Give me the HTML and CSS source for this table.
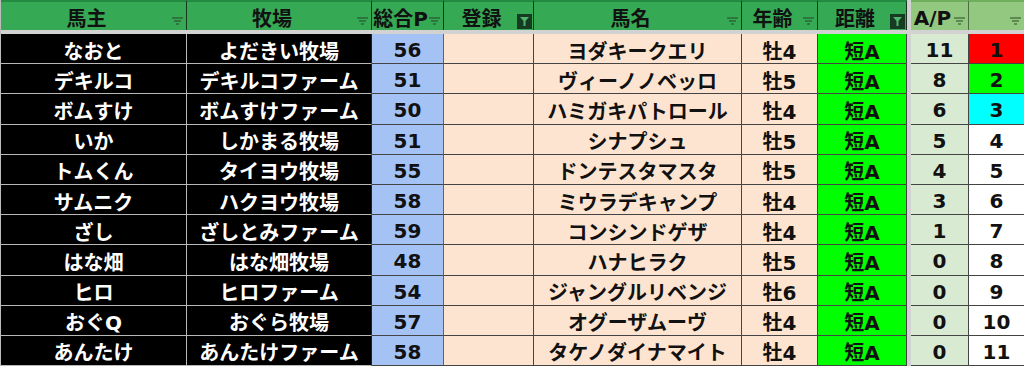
FILE: index.html
```html
<!DOCTYPE html>
<html lang="ja">
<head>
    <meta charset="UTF-8">
    <title>出走馬一覧</title>
    <link rel="stylesheet" href="styles.css">
</head>
<body>
    <div class="sheet" id="sheet">
        <div class="hd">馬主<svg class="flt" width="11" height="8" viewBox="0 0 11 8"><path d="M0 0h11v2H0zM2 3h7v2H2zM4 6h3v2H4z"/></svg></div>
        <div class="hd">牧場<svg class="flt" width="11" height="8" viewBox="0 0 11 8"><path d="M0 0h11v2H0zM2 3h7v2H2zM4 6h3v2H4z"/></svg></div>
        <div class="hd">総合P<svg class="flt" width="11" height="8" viewBox="0 0 11 8"><path d="M0 0h11v2H0zM2 3h7v2H2zM4 6h3v2H4z"/></svg></div>
        <div class="hd">登録<svg class="flt-on" width="15" height="15" viewBox="0 0 15 15"><rect width="15" height="15" fill="#163a22"/><path d="M3 3h9l-3.5 4v5h-2v-5z" fill="#4fb56c"/></svg></div>
        <div class="hd">馬名<svg class="flt" width="11" height="8" viewBox="0 0 11 8"><path d="M0 0h11v2H0zM2 3h7v2H2zM4 6h3v2H4z"/></svg></div>
        <div class="hd">年齢<svg class="flt" width="11" height="8" viewBox="0 0 11 8"><path d="M0 0h11v2H0zM2 3h7v2H2zM4 6h3v2H4z"/></svg></div>
        <div class="hd">距離<svg class="flt-on" width="15" height="15" viewBox="0 0 15 15"><rect width="15" height="15" fill="#163a22"/><path d="M3 3h9l-3.5 4v5h-2v-5z" fill="#4fb56c"/></svg></div>
        <div class="hd hd-light ap">A/P<svg class="flt" width="11" height="8" viewBox="0 0 11 8"><path d="M0 0h11v2H0zM2 3h7v2H2zM4 6h3v2H4z"/></svg></div>
        <div class="hd hd-light"><svg class="flt" width="11" height="8" viewBox="0 0 11 8"><path d="M0 0h11v2H0zM2 3h7v2H2zM4 6h3v2H4z"/></svg></div>
    </div>

    <script>
        // 出走馬データ
        const horses = [
            ['なおと', 'よだきい牧場', 56, 'ヨダキークエリ', '牡4', 11, 1, 'red'],
            ['デキルコ', 'デキルコファーム', 51, 'ヴィーノノベッロ', '牡5', 8, 2, 'green'],
            ['ボムすけ', 'ボムすけファーム', 50, 'ハミガキパトロール', '牡4', 6, 3, 'cyan'],
            ['いか', 'しかまる牧場', 51, 'シナプシュ', '牡5', 5, 4, ''],
            ['トムくん', 'タイヨウ牧場', 55, 'ドンテスタマスタ', '牡5', 4, 5, ''],
            ['サムニク', 'ハクヨウ牧場', 58, 'ミウラデキャンプ', '牡4', 3, 6, ''],
            ['ざし', 'ざしとみファーム', 59, 'コンシンドゲザ', '牡4', 1, 7, ''],
            ['はな畑', 'はな畑牧場', 48, 'ハナヒラク', '牡5', 0, 8, ''],
            ['ヒロ', 'ヒロファーム', 54, 'ジャングルリベンジ', '牡6', 0, 9, ''],
            ['おぐQ', 'おぐら牧場', 57, 'オグーザムーヴ', '牡4', 0, 10, ''],
            ['あんたけ', 'あんたけファーム', 58, 'タケノダイナマイト', '牡4', 0, 11, '']
        ];

        function cell(text, cls) {
            const div = document.createElement('div');
            div.className = 'c ' + cls;
            div.textContent = text;
            return div;
        }

        const sheet = document.getElementById('sheet');
        horses.forEach(h => {
            sheet.appendChild(cell(h[0], 'owner'));
            sheet.appendChild(cell(h[1], 'farm'));
            sheet.appendChild(cell(h[2], 'point'));
            sheet.appendChild(cell('', 'peach'));
            sheet.appendChild(cell(h[3], 'peach'));
            sheet.appendChild(cell(h[4], 'peach'));
            sheet.appendChild(cell('短A', 'dist'));
            sheet.appendChild(cell(h[5], 'ap'));
            sheet.appendChild(cell(h[6], 'rank ' + h[7]));
        });
    </script>
</body>
</html>
```

FILE: styles.css
```css
body {
    margin: 0;
    background-color: #fff;
    font-family: "DejaVu Sans", "Noto Sans CJK JP", sans-serif;
}
.sheet {
    display: grid;
    grid-template-columns: 186px 185px 72px 90px 208px 76px 89px 62px 56px;
    grid-template-rows: 34px;
    grid-auto-rows: 30.2px;
    width: 1024px;
    height: 366px;
    overflow: hidden;
    background-color: #d2d2d2;
    border-left: 1px solid #bcbcbc;
    box-sizing: border-box;
}
.hd {
    position: relative;
    height: 30px;
    box-sizing: border-box;
    display: flex;
    align-items: center;
    justify-content: center;
    padding: 3px 14px 0 0;
    background-color: #36a955;
    border-top: 2px solid #238a42;
    border-right: 1px solid #17351f;
    font-size: 20px;
    font-weight: bold;
    color: #111;
}
.hd-light {
    background-color: #93c880;
    border-top-color: #6fae5d;
    border-right-color: #4b6d41;
}
.flt {
    position: absolute;
    right: 3px;
    bottom: 5px;
    fill: #2b6a3c;
    opacity: 0.8;
}
.hd-light .flt {
    fill: #4f7b45;
}
.flt-on {
    position: absolute;
    right: 1px;
    bottom: 1px;
}
.c {
    box-sizing: border-box;
    display: flex;
    align-items: center;
    justify-content: center;
    padding-top: 3px;
    border-right: 1px solid #444;
    border-bottom: 1px solid #444;
    font-size: 20px;
    font-weight: bold;
    color: #111;
    white-space: nowrap;
}
.owner,
.farm {
    background-color: #000;
    color: #fff;
    border-bottom-color: #b8b8b8;
}
.owner {
    border-right-color: #b8b8b8;
}
.farm {
    border-right-color: #222;
}
.point {
    background-color: #a4c2f4;
    border-right-color: #5a6470;
}
.peach {
    background-color: #fde4d0;
}
.dist {
    background-color: #00ff00;
}
.ap {
    margin-left: 4px;
}
.c.ap {
    background-color: #d9ead3;
}
.rank {
    background-color: #fff;
}
.rank.red {
    background-color: #ff0000;
}
.rank.green {
    background-color: #00ff00;
}
.rank.cyan {
    background-color: #00ffff;
}
```
